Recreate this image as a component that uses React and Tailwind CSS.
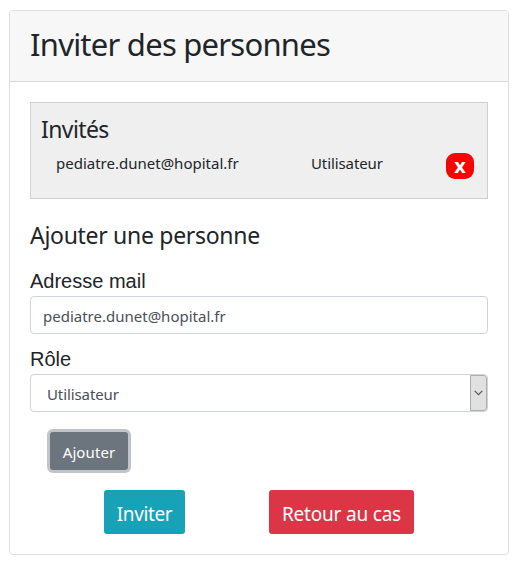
import React from "react";

function RemoveButton() {
  return (
    <button className="flex h-[26px] w-7 items-center justify-center rounded-[9px] bg-[#ff0000] pb-px text-[20px] font-bold leading-none text-white">
      x
    </button>
  );
}

function GuestRow({ email, role }) {
  return (
    <div className="flex items-start pl-[15px] pr-[13px] text-[15px] leading-[22px]">
      <span className="w-[255px]">{email}</span>
      <span className="flex-1 tracking-[-0.1px]">{role}</span>
      <div className="pt-px">
        <RemoveButton />
      </div>
    </div>
  );
}

function RoleSelect({ value }) {
  return (
    <div className="flex h-[38px] overflow-hidden rounded border border-[#ced4da] bg-white text-[15px] text-[#495057]">
      <span className="flex-1 pl-4 pt-px leading-[36px] tracking-[-0.1px]">{value}</span>
      <span className="flex h-9 w-[17px] items-center justify-center rounded-r-[3px] border border-[#adadad] bg-[#e1e1e1]">
        <svg width="9" height="6" viewBox="0 0 9 6" fill="none" stroke="#555" strokeWidth="1.2">
          <path d="M0.7 0.8 L4.5 4.6 L8.3 0.8" />
        </svg>
      </span>
    </div>
  );
}

export default function App() {
  return (
    <div className="h-[567px] w-[520px] bg-white pl-[9px] pt-[10px] font-['Noto_Sans','Open_Sans',sans-serif] text-[#212529]">
      <div className="h-[545px] w-[500px] overflow-hidden rounded border border-[#dfdfdf] bg-white">
        <header className="h-[71px] border-b border-[#d9d9d9] bg-[#f7f7f7] pl-5 pt-[14px]">
          <h1 className="whitespace-nowrap text-[31px] leading-[38px] tracking-[-0.76px]">Inviter des personnes</h1>
        </header>
        <main className="px-5 pt-5">
          <section className="h-[97px] border border-[#d0d0d0] bg-[#efefef] pl-[10px] pt-[11px]">
            <h2 className="mb-[5px] h-[33px] text-[23px] leading-[30px] tracking-[-0.6px]">Invités</h2>
            <GuestRow email="pediatre.dunet@hopital.fr" role="Utilisateur" />
          </section>
          <h2 className="mt-[22px] h-[29px] text-[23px] leading-[29px] tracking-[-0.3px]">Ajouter une personne</h2>
          <label className="mt-[19px] block h-[27px] font-['Liberation_Sans',Arial,sans-serif] text-[20px] leading-6">
            Adresse mail
          </label>
          <div className="h-[38px] rounded border border-[#ced4da] bg-white pl-3 pt-px text-[15px] leading-[37px] text-[#495057]">
            pediatre.dunet@hopital.fr
          </div>
          <label className="mt-[13px] block h-[27px] font-['Liberation_Sans',Arial,sans-serif] text-[20px] leading-6">
            Rôle
          </label>
          <RoleSelect value="Utilisateur" />
          <button className="ml-5 mt-5 flex h-[38px] w-[78px] items-center justify-center rounded-[3px] bg-[#6c757d] pt-0.5 text-[15px] tracking-[0.1px] text-white ring-3 ring-[#c1c4c8]">
            Ajouter
          </button>
          <div className="mt-5 flex gap-[84px] pl-[74px] text-[19px] text-white">
            <button className="flex h-11 w-[81px] items-center justify-center rounded-[3px] bg-[#17a2b8] pt-1 tracking-[-0.4px]">
              Inviter
            </button>
            <button className="flex h-11 w-[145px] items-center justify-center whitespace-nowrap rounded-[3px] bg-[#dc3545] pt-1 tracking-[-0.2px]">
              Retour au cas
            </button>
          </div>
        </main>
      </div>
    </div>
  );
}
